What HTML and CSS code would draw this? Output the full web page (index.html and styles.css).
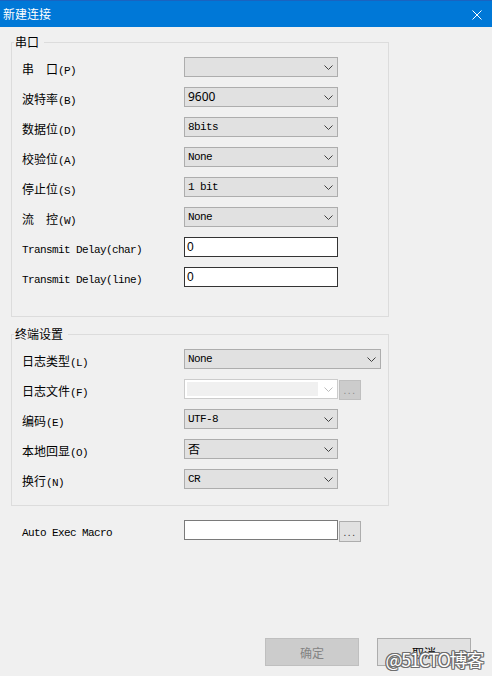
FILE: index.html
```html
<!DOCTYPE html>
<html lang="zh-CN">
<head>
<meta charset="utf-8">
<title>新建连接</title>
<link rel="stylesheet" href="styles.css">
</head>
<body>
<div class="window">
  <div class="titlebar">
    <span class="title">新建连接</span>
    <svg class="close" width="10" height="10" viewBox="0 0 10 10"><path d="M0.5 0.5 L9.5 9.5 M9.5 0.5 L0.5 9.5" stroke="#fff" stroke-width="1" fill="none"/></svg>
  </div>

  <fieldset class="group g1">
    <legend>串口</legend>
    <div class="row">
      <span class="lbl">串　口<span class="lat">(P)</span></span>
      <div class="combo"><span class="val"></span><svg class="chev" width="9" height="5" viewBox="0 0 9 5"><path d="M0.5 0.5 L4.5 4.5 L8.5 0.5" stroke="#404040" fill="none"/></svg></div>
    </div>
    <div class="row">
      <span class="lbl">波特率<span class="lat">(B)</span></span>
      <div class="combo"><span class="val sans">9600</span><svg class="chev" width="9" height="5" viewBox="0 0 9 5"><path d="M0.5 0.5 L4.5 4.5 L8.5 0.5" stroke="#404040" fill="none"/></svg></div>
    </div>
    <div class="row">
      <span class="lbl">数据位<span class="lat">(D)</span></span>
      <div class="combo"><span class="val lat">8bits</span><svg class="chev" width="9" height="5" viewBox="0 0 9 5"><path d="M0.5 0.5 L4.5 4.5 L8.5 0.5" stroke="#404040" fill="none"/></svg></div>
    </div>
    <div class="row">
      <span class="lbl">校验位<span class="lat">(A)</span></span>
      <div class="combo"><span class="val lat">None</span><svg class="chev" width="9" height="5" viewBox="0 0 9 5"><path d="M0.5 0.5 L4.5 4.5 L8.5 0.5" stroke="#404040" fill="none"/></svg></div>
    </div>
    <div class="row">
      <span class="lbl">停止位<span class="lat">(S)</span></span>
      <div class="combo"><span class="val lat">1 bit</span><svg class="chev" width="9" height="5" viewBox="0 0 9 5"><path d="M0.5 0.5 L4.5 4.5 L8.5 0.5" stroke="#404040" fill="none"/></svg></div>
    </div>
    <div class="row">
      <span class="lbl">流　控<span class="lat">(W)</span></span>
      <div class="combo"><span class="val lat">None</span><svg class="chev" width="9" height="5" viewBox="0 0 9 5"><path d="M0.5 0.5 L4.5 4.5 L8.5 0.5" stroke="#404040" fill="none"/></svg></div>
    </div>
    <div class="row">
      <span class="lbl lat">Transmit Delay(char)</span>
      <div class="input dark"><span class="val">0</span></div>
    </div>
    <div class="row">
      <span class="lbl lat">Transmit Delay(line)</span>
      <div class="input dark"><span class="val">0</span></div>
    </div>
  </fieldset>

  <fieldset class="group g2">
    <legend>终端设置</legend>
    <div class="row">
      <span class="lbl">日志类型<span class="lat">(L)</span></span>
      <div class="combo wide"><span class="val lat">None</span><svg class="chev" width="9" height="5" viewBox="0 0 9 5"><path d="M0.5 0.5 L4.5 4.5 L8.5 0.5" stroke="#404040" fill="none"/></svg></div>
    </div>
    <div class="row">
      <span class="lbl">日志文件<span class="lat">(F)</span></span>
      <div class="combo disabled"><span class="field"></span><svg class="chev" width="9" height="5" viewBox="0 0 9 5"><path d="M0.5 0.5 L4.5 4.5 L8.5 0.5" stroke="#bdbdbd" fill="none"/></svg></div>
      <div class="dots off">...</div>
    </div>
    <div class="row">
      <span class="lbl">编码<span class="lat">(E)</span></span>
      <div class="combo"><span class="val lat">UTF-8</span><svg class="chev" width="9" height="5" viewBox="0 0 9 5"><path d="M0.5 0.5 L4.5 4.5 L8.5 0.5" stroke="#404040" fill="none"/></svg></div>
    </div>
    <div class="row">
      <span class="lbl">本地回显<span class="lat">(O)</span></span>
      <div class="combo"><span class="val">否</span><svg class="chev" width="9" height="5" viewBox="0 0 9 5"><path d="M0.5 0.5 L4.5 4.5 L8.5 0.5" stroke="#404040" fill="none"/></svg></div>
    </div>
    <div class="row">
      <span class="lbl">换行<span class="lat">(N)</span></span>
      <div class="combo"><span class="val lat">CR</span><svg class="chev" width="9" height="5" viewBox="0 0 9 5"><path d="M0.5 0.5 L4.5 4.5 L8.5 0.5" stroke="#404040" fill="none"/></svg></div>
    </div>
  </fieldset>

  <div class="row macro">
    <span class="lbl lat">Auto Exec Macro</span>
    <div class="input gray"></div>
    <div class="dots on">...</div>
  </div>

  <div class="footer">
    <button class="btn off" type="button">确定</button>
    <button class="btn" type="button">取消</button>
  </div>

  <div class="watermark">@51CTO博客</div>
</div>
</body>
</html>
```

FILE: styles.css
```css
* { box-sizing: border-box; }

html, body {
  margin: 0;
  padding: 0;
  background: #f0f0f0;
}

body {
  font-family: "Noto Sans CJK SC", "Noto Sans", sans-serif;
  font-size: 12px;
  color: #000;
}

.window {
  position: relative;
  width: 492px;
  height: 676px;
  display: flex;
  flex-direction: column;
  background: #f0f0f0;
  overflow: hidden;
}

.titlebar {
  height: 27px;
  flex: none;
  background: #0078d7;
  border-top: 1px solid #1a63c0;
  display: flex;
  align-items: center;
  justify-content: space-between;
  padding: 0 10px 0 3px;
}

.title {
  color: #fff;
  font-size: 12px;
  line-height: 14px;
  margin-top: -1px;
}

.close { display: block; margin-top: 1px; }

.group {
  margin: 9px 0 0 11px;
  width: 378px;
  min-width: 0;
  border: 1px solid #dcdcdc;
  padding: 9px 0 29px 0;
}

.group legend {
  margin-left: 2px;
  padding: 0 5px 0 1px;
  font-size: 12px;
  line-height: 12px;
}

.g2 {
  margin-top: 11px;
  padding-bottom: 16px;
}

.row {
  display: flex;
  align-items: center;
  height: 20px;
  padding-left: 10px;
  margin-bottom: 10px;
}

.row:last-child { margin-bottom: 0; }

.lbl {
  width: 162px;
  flex: none;
  padding-top: 6px;
  line-height: 14px;
  white-space: pre;
}

.lat {
  font-family: "Liberation Mono", monospace;
  font-size: 11px;
  letter-spacing: -0.6px;
}

.sans {
  font-family: "Noto Sans", sans-serif;
  font-size: 12px;
}

.combo {
  width: 154px;
  height: 20px;
  flex: none;
  border: 1px solid #adadad;
  background: #e1e1e1;
  display: flex;
  align-items: center;
  justify-content: space-between;
  padding: 0 4px 0 3px;
}

.combo.wide { width: 197px; }

.combo .val { line-height: 14px; }

.chev { display: block; flex: none; }

.combo.disabled {
  border-color: #cccccc;
  background: #fff;
  padding: 2px 4px 2px 2px;
}

.combo.disabled .field {
  align-self: stretch;
  width: 131px;
  background: #f0f0f0;
}

.input {
  width: 154px;
  height: 20px;
  flex: none;
  background: #fff;
  display: flex;
  align-items: center;
  padding-left: 2px;
}

.input.dark { border: 1px solid #333; }
.input.gray { border: 1px solid #7a7a7a; }

.input .val {
  font-family: "Liberation Sans", sans-serif;
  font-size: 12px;
  line-height: 14px;
}

.dots {
  width: 22px;
  height: 20px;
  flex: none;
  margin-left: 1px;
  margin-top: 2px;
  display: flex;
  align-items: flex-end;
  justify-content: center;
  padding-bottom: 3px;
  font-family: "Liberation Sans", sans-serif;
  font-size: 10px;
  letter-spacing: 1.5px;
  line-height: 10px;
}

.dots.off {
  background: #cccccc;
  border: 1px solid #bfbfbf;
  color: #8a8a8a;
}

.dots.on {
  background: #e1e1e1;
  border: 1px solid #adadad;
  color: #333;
  height: 21px;
  margin-top: 3px;
}

.macro {
  margin-top: 14px;
  padding-left: 22px;
}

.footer {
  margin-top: auto;
  display: flex;
  justify-content: flex-end;
  gap: 18px;
  padding: 0 21px 10px 0;
}

.btn {
  width: 94px;
  height: 28px;
  border: 1px solid #adadad;
  background: #e1e1e1;
  font-family: "Noto Sans CJK SC", sans-serif;
  font-size: 12px;
  color: #000;
  padding: 0;
}

.btn.off {
  background: #cccccc;
  border-color: #bfbfbf;
  color: #838383;
}

.watermark {
  position: absolute;
  right: 9px;
  bottom: 7px;
  font-family: "Noto Sans CJK SC", sans-serif;
  font-size: 18px;
  line-height: 20px;
  letter-spacing: -1.3px;
  color: #fff;
  text-shadow: 1px 0 0 #6e6e6e, -1px 0 0 #6e6e6e, 0 1px 0 #6e6e6e, 0 -1px 0 #6e6e6e, 1px 1px 0 #6e6e6e, -1px -1px 0 #6e6e6e, 1px -1px 0 #6e6e6e, -1px 1px 0 #6e6e6e;
}
```
